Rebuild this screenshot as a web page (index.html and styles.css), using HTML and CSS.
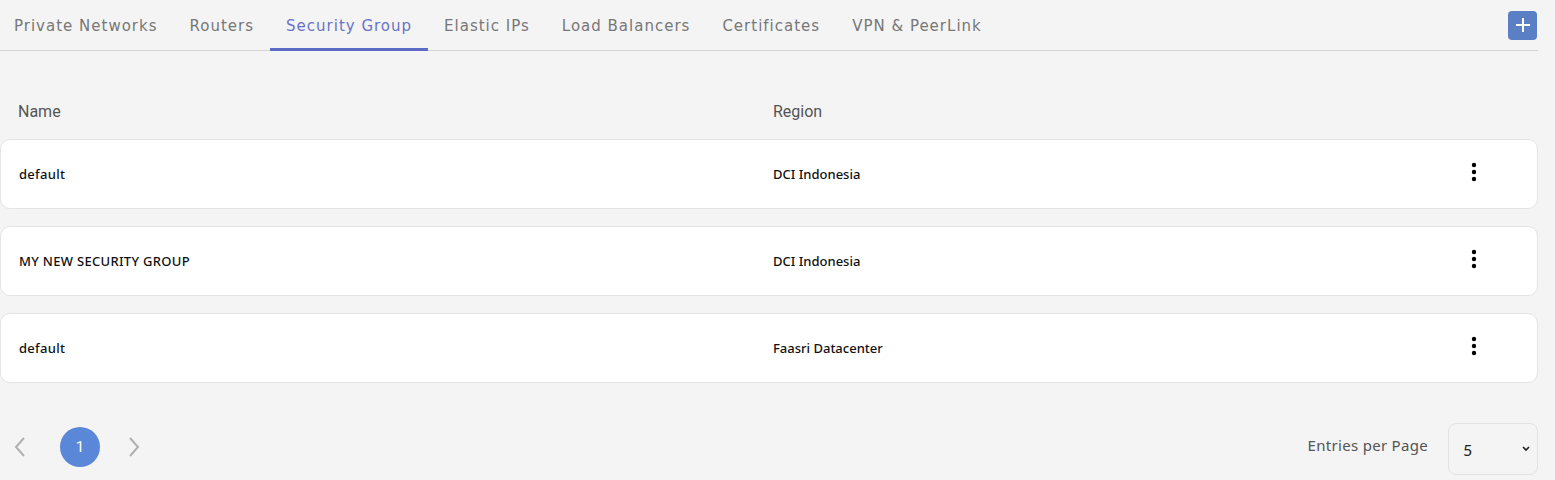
FILE: index.html
```html
<!DOCTYPE html>
<html lang="en">

<head>
    <meta charset="UTF-8">
    <meta name="viewport" content="width=device-width, initial-scale=1.0">
    <title>Security Group</title>
    <link rel="stylesheet" href="styles.css">
</head>

<body>
    <div class="page">
        <nav class="tabs">
            <ul class="tab-list">
                <li class="tab">Private Networks</li>
                <li class="tab">Routers</li>
                <li class="tab active">Security Group</li>
                <li class="tab">Elastic IPs</li>
                <li class="tab">Load Balancers</li>
                <li class="tab">Certificates</li>
                <li class="tab">VPN &amp; PeerLink</li>
            </ul>
            <button class="add-btn" aria-label="Add">
                <svg width="16" height="16" viewBox="0 0 16 16">
                    <path d="M8 1v14M1 8h14" stroke="#fff" stroke-width="2" fill="none"/>
                </svg>
            </button>
        </nav>

        <div class="table-head">
            <div class="col-name">Name</div>
            <div class="col-region">Region</div>
        </div>

        <div class="row">
            <div class="col-name">default</div>
            <div class="col-region">DCI Indonesia</div>
            <div class="col-menu">
                <svg width="6" height="20" viewBox="0 0 6 20">
                    <circle cx="3" cy="3" r="2.2"/>
                    <circle cx="3" cy="10" r="2.2"/>
                    <circle cx="3" cy="17" r="2.2"/>
                </svg>
            </div>
        </div>

        <div class="row">
            <div class="col-name">MY NEW SECURITY GROUP</div>
            <div class="col-region">DCI Indonesia</div>
            <div class="col-menu">
                <svg width="6" height="20" viewBox="0 0 6 20">
                    <circle cx="3" cy="3" r="2.2"/>
                    <circle cx="3" cy="10" r="2.2"/>
                    <circle cx="3" cy="17" r="2.2"/>
                </svg>
            </div>
        </div>

        <div class="row">
            <div class="col-name">default</div>
            <div class="col-region">Faasri Datacenter</div>
            <div class="col-menu">
                <svg width="6" height="20" viewBox="0 0 6 20">
                    <circle cx="3" cy="3" r="2.2"/>
                    <circle cx="3" cy="10" r="2.2"/>
                    <circle cx="3" cy="17" r="2.2"/>
                </svg>
            </div>
        </div>

        <div class="pagination">
            <div class="pager">
                <span class="chevron">
                    <svg width="12" height="20" viewBox="0 0 12 20">
                        <path d="M10 1L2 10l8 9" stroke="#b0b0b0" stroke-width="2" fill="none"/>
                    </svg>
                </span>
                <span class="page-num">1</span>
                <span class="chevron">
                    <svg width="12" height="20" viewBox="0 0 12 20">
                        <path d="M2 1l8 9-8 9" stroke="#b0b0b0" stroke-width="2" fill="none"/>
                    </svg>
                </span>
            </div>
            <div class="entries">
                <span class="entries-label">Entries per Page</span>
                <div class="entries-select">
                    <span>5</span>
                    <svg width="8" height="6" viewBox="0 0 8 6">
                        <path d="M1 1l3 3 3-3" stroke="#222" stroke-width="1.6" fill="none"/>
                    </svg>
                </div>
            </div>
        </div>
    </div>
</body>
</html>
```

FILE: styles.css
```css
body {
    margin: 0;
    padding: 0;
    background-color: #f4f4f4;
    font-family: 'Noto Sans', sans-serif;
}

.page {
    width: 1538px;
}

.tabs {
    display: flex;
    align-items: center;
    justify-content: space-between;
    height: 50px;
    border-bottom: 1px solid #d4d4d4;
}

.tab-list {
    display: flex;
    list-style: none;
    margin: 0 0 0 -2px;
    padding: 0;
    height: 100%;
}

.tab {
    display: flex;
    align-items: center;
    padding: 0 16px;
    font-family: 'DejaVu Sans', sans-serif;
    font-size: 15px;
    color: #777;
    letter-spacing: 1px;
    box-sizing: border-box;
    border-bottom: 3px solid transparent;
    padding-top: 3px;
    margin-bottom: -1px;
    height: 51px;
    cursor: pointer;
}

.tab.active {
    color: #6a72c8;
    border-bottom-color: #5b6bc6;
}

.add-btn {
    width: 29px;
    height: 29px;
    margin-right: 1px;
    border: none;
    border-radius: 4px;
    background-color: #5b7fc5;
    display: flex;
    align-items: center;
    justify-content: center;
    padding: 0;
}

.table-head {
    display: flex;
    align-items: center;
    height: 40px;
    margin-top: 40px;
    margin-bottom: 8px;
    padding-left: 18px;
    font-family: 'Roboto', sans-serif;
    font-size: 16px;
    color: #555;
}

.col-name {
    width: 755px;
}

.col-region {
    flex: 1;
}

.row {
    display: flex;
    align-items: center;
    height: 70px;
    box-sizing: border-box;
    margin-bottom: 17px;
    padding-left: 18px;
    padding-right: 60px;
    background-color: #fff;
    border: 1px solid #e4e4e4;
    border-radius: 10px;
    font-size: 13px;
    font-weight: 500;
    color: #111;
}

.row .col-name {
    width: 754px;
    letter-spacing: 0.3px;
}

.col-menu {
    display: flex;
    align-items: center;
    margin-top: -4px;
}

.pagination {
    display: flex;
    justify-content: space-between;
    align-items: flex-start;
    margin-top: 40px;
}

.pager {
    display: flex;
    align-items: center;
    height: 44px;
    margin-top: 2px;
    padding-left: 14px;
}

.chevron {
    display: flex;
    align-items: center;
}

.page-num {
    width: 40px;
    height: 40px;
    margin: 0 28px 0 34px;
    border-radius: 50%;
    background-color: #5b87d8;
    color: #fff;
    font-family: 'Roboto', sans-serif;
    font-size: 15px;
    display: flex;
    align-items: center;
    justify-content: center;
}

.entries {
    display: flex;
    align-items: flex-start;
}

.entries-label {
    font-family: 'Noto Sans', sans-serif;
    font-size: 15px;
    letter-spacing: 0.3px;
    color: #555;
    line-height: 44px;
    margin-right: 20px;
}

.entries-select {
    width: 90px;
    height: 52px;
    box-sizing: border-box;
    border: 1px solid #e2e2e2;
    border-radius: 8px;
    display: flex;
    align-items: center;
    justify-content: space-between;
    padding: 0 7px 0 14px;
    font-family: 'Lato', sans-serif;
    font-size: 16px;
    color: #222;
}
```
